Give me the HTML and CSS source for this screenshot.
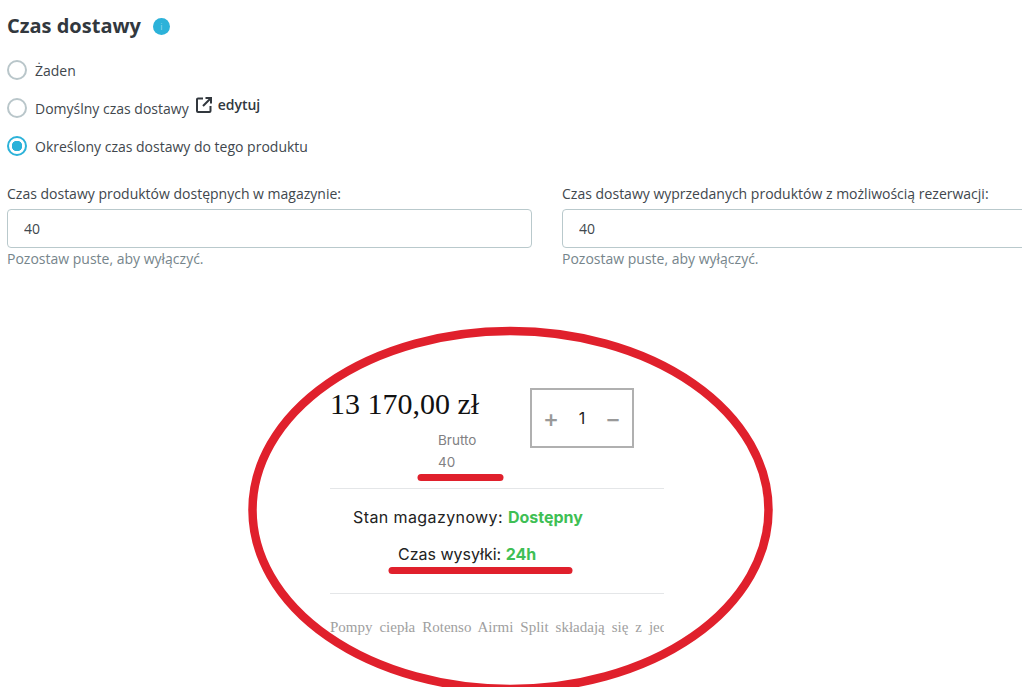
FILE: index.html
```html
<!DOCTYPE html>
<html lang="en">
<head>
  <meta charset="UTF-8">
  <title>Czas dostawy</title>
  <link rel="stylesheet" href="styles.css">
</head>
<body>
  <div class="settings">
    <h2 class="title">Czas dostawy <span class="info">i</span></h2>

    <div class="radio-row">
      <span class="radio"></span>
      <span>Żaden</span>
    </div>
    <div class="radio-row">
      <span class="radio"></span>
      <span>Domyślny czas dostawy</span>
      <span class="edit">
        <svg width="16" height="16" viewBox="0 0 16 16" fill="none" stroke="#32383e" stroke-width="2">
          <path d="M7 1.500H2a1 1 0 0 0-1 1V14a1 1 0 0 0 1 1h11.500a1 1 0 0 0 1-1V9"/>
          <path d="M9.500 1h5.500v5.500M15 1L7 9"/>
        </svg>
        edytuj
      </span>
    </div>
    <div class="radio-row">
      <span class="radio checked"></span>
      <span>Określony czas dostawy do tego produktu</span>
    </div>

    <div class="fields">
      <div class="field">
        <label>Czas dostawy produktów dostępnych w magazynie:</label>
        <input type="text" class="input" value="40">
        <div class="hint">Pozostaw puste, aby wyłączyć.</div>
      </div>
      <div class="field">
        <label>Czas dostawy wyprzedanych produktów z możliwością rezerwacji:</label>
        <input type="text" class="input" value="40">
        <div class="hint">Pozostaw puste, aby wyłączyć.</div>
      </div>
    </div>
  </div>

  <div class="product">
    <div class="buy-row">
      <div class="price-box">
        <div class="price">13 170,00 zł</div>
        <div class="small">Brutto</div>
        <div class="small">40</div>
      </div>
      <div class="qty">
        <span class="qty-btn">+</span>
        <span class="qty-num">1</span>
        <span class="qty-btn">−</span>
      </div>
    </div>
    <div class="stock">
      <p class="stock-a">Stan magazynowy: <b>Dostępny</b></p>
      <p class="stock-b">Czas wysyłki: <b>24h</b></p>
    </div>
    <div class="desc">Pompy ciepła Rotenso Airmi Split składają się z jednostki</div>
  </div>

  <!-- red marks drawn over the screenshot -->
  <svg class="marks" width="1022" height="687" viewBox="0 0 1022 687" fill="none" stroke="#e0202c">
    <ellipse cx="510.500" cy="510" rx="258" ry="179" stroke-width="8.500"/>
    <path d="M421 477.500H500" stroke-width="7" stroke-linecap="round"/>
    <path d="M392 570.500H569" stroke-width="7" stroke-linecap="round"/>
  </svg>
</body>
</html>
```

FILE: styles.css
```css
html, body {
  margin: 0;
  height: 687px;
  overflow: hidden;
  background: #ffffff;
}

body {
  position: relative;
  font-family: "Open Sans", sans-serif;
  font-size: 14px;
  color: #41474d;
}

.settings {
  padding: 13px 0 0 7px;
}

.title {
  margin: 0 0 21px;
  font-size: 20px;
  line-height: 26px;
  font-weight: 700;
  color: #32383e;
  display: flex;
  align-items: center;
  gap: 7px;
}

.info {
  width: 17px;
  height: 17px;
  margin-left: 5px;
  border-radius: 50%;
  background: #2cb2d9;
  color: #8fd8ee;
  font-size: 9px;
  line-height: 17px;
  text-align: center;
  font-weight: 400;
}

.radio-row {
  display: flex;
  align-items: center;
  height: 20px;
  margin-bottom: 18px;
}

.radio {
  box-sizing: border-box;
  width: 20px;
  height: 20px;
  border: 2px solid #b9c6ca;
  border-radius: 50%;
  margin-right: 8px;
  flex: none;
}

.radio.checked {
  border-color: #2cb2d9;
  background: radial-gradient(circle, #2cb2d9 0 5px, #ffffff 5.500px);
}

.edit {
  display: flex;
  align-items: center;
  gap: 6px;
  margin: -7px 0 0 7px;
  font-weight: 600;
  color: #32383e;
}

.fields {
  display: flex;
  gap: 30px;
  width: 1080px;
  margin-top: 28px;
}

.field {
  width: 525px;
  flex: none;
}

.field label {
  display: block;
  line-height: 20px;
  margin-bottom: 5px;
}

.input {
  box-sizing: border-box;
  display: block;
  width: 100%;
  height: 39px;
  padding: 0 16px;
  border: 1px solid #b9c9cc;
  border-radius: 4px;
  font-family: inherit;
  font-size: 14px;
  color: #41474d;
}

.hint {
  margin-top: 1px;
  line-height: 20px;
  color: #76858b;
}

.product {
  width: 334px;
  margin: 115px 0 0 330px;
  font-family: Inter, sans-serif;
}

.buy-row {
  display: flex;
  align-items: flex-start;
  height: 104px;
  border-bottom: 1px solid #e4e6e8;
}

.price-box {
  width: 200px;
  flex: none;
}

.price {
  margin-top: 3px;
  font-family: "Liberation Serif", serif;
  font-size: 30px;
  line-height: 34px;
  color: #111111;
}

.small {
  margin-left: 108px;
  font-size: 13.500px;
  line-height: 22px;
  color: #808083;
}

.price + .small {
  margin-top: 8px;
}

.qty {
  box-sizing: border-box;
  width: 104px;
  height: 60px;
  margin-top: 4px;
  border: 2px solid #b0b0b0;
  display: flex;
  align-items: center;
  justify-content: space-between;
  padding: 0 11px;
}

.qty-btn {
  font-size: 24px;
  font-weight: 500;
  color: #999999;
}

.qty-num {
  margin-top: -1px;
  font-size: 16px;
  color: #222222;
}

.stock {
  height: 104px;
  border-bottom: 1px solid #e4e6e8;
  font-size: 16px;
  color: #222222;
}

.stock p {
  margin: 0;
  line-height: 22px;
}

.stock b {
  color: #3fbf55;
  font-weight: 700;
  letter-spacing: 0;
}

.stock-a {
  padding: 17px 0 0 23px;
  letter-spacing: 0.400px;
}

.stock-b {
  padding: 15px 0 0 68px;
}

.desc {
  margin-top: 23px;
  font-family: "Liberation Serif", serif;
  font-size: 15px;
  line-height: 20px;
  word-spacing: 3.200px;
  color: #a0a0a0;
  white-space: nowrap;
  overflow: hidden;
}

.marks {
  position: absolute;
  left: 0;
  top: 0;
}
```
